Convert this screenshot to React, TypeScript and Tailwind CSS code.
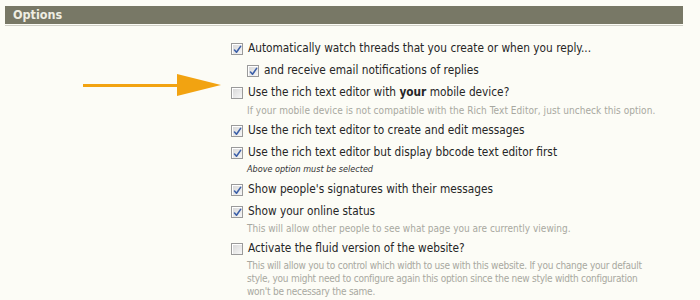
import React from 'react'

const font = { fontFamily: '"DejaVu Sans Condensed", "DejaVu Sans", sans-serif' }

function Box({ checked }: { checked?: boolean }) {
  return (
    <span className="relative mr-[5px] flex h-[12px] w-[12px] shrink-0 items-center justify-center border border-[#9a9a9a] bg-gradient-to-br from-[#d6d6d6] to-[#f7f7f7] shadow-[inset_1px_1px_0_#ffffff]">
      {checked && (
        <svg width="9" height="9" viewBox="0 0 9 9">
          <path d="M1.5 5 L3.5 7.2 L7.6 1.4" fill="none" stroke="#3b5fa8" strokeWidth="1.6" strokeLinecap="round" strokeLinejoin="round" />
        </svg>
      )}
    </span>
  )
}

function Row({ checked, children, className = '' }: { checked?: boolean; children: React.ReactNode; className?: string }) {
  return (
    <div className={`flex h-[22px] items-center text-[11.75px] text-[#262626] ${className}`}>
      <Box checked={checked} />
      <span className="whitespace-nowrap">{children}</span>
    </div>
  )
}

function Hint({ children, className = '' }: { children: React.ReactNode; className?: string }) {
  return <div className={`pl-[16px] text-[10px] leading-[13px] text-[#a8a8a0] ${className}`}>{children}</div>
}

export default function App() {
  return (
    <div className="h-[300px] w-[700px] overflow-hidden bg-[#fcfcf6] pt-[6px]" style={font}>
      <div className="mx-[5px] w-[678px] border-b border-[#cfcfc6] pb-px">
        <div className="flex h-[18px] items-center bg-[#787866] pl-[8px] text-[12.5px] font-bold text-[#efeee2]">
          Options
        </div>
      </div>

      <div className="relative pl-[231px] pt-[12px]">
        <div className="absolute left-[83px] top-[48px] flex items-center">
          <div className="h-[3px] w-[96px] bg-[#f2a311]" />
          <svg width="44" height="22" viewBox="0 0 44 22" className="-ml-[2px]">
            <path d="M0 0 L44 11 L0 22 Z" fill="#f2a311" />
          </svg>
        </div>

        <Row checked>Automatically watch threads that you create or when you reply...</Row>
        <Row checked className="pl-[16px]">
          and receive email notifications of replies
        </Row>
        <Row>
          Use the rich text editor with <b>your</b> mobile device?
        </Row>
        <Hint className="tracking-[0.05px]">
          If your mobile device is not compatible with the Rich Text Editor, just uncheck this option.
        </Hint>
        <Row checked className="mt-[3px]">
          Use the rich text editor to create and edit messages
        </Row>
        <Row checked>Use the rich text editor but display bbcode text editor first</Row>
        <div className="pl-[16px] text-[9px] italic leading-[11px] text-[#333333]">Above option must be selected</div>
        <Row checked className="mt-[4px]">
          Show people's signatures with their messages
        </Row>
        <Row checked>Show your online status</Row>
        <Hint className="-mt-px">This will allow other people to see what page you are currently viewing.</Hint>
        <Row className="mt-[3px]">Activate the fluid version of the website?</Row>
        <Hint className="-mt-px tracking-[-0.25px]">
          This will allow you to control which width to use with this website. If you change your default
          <br />
          style, you might need to configure again this option since the new style width configuration
          <br />
          won't be necessary the same.
        </Hint>
      </div>
    </div>
  )
}
